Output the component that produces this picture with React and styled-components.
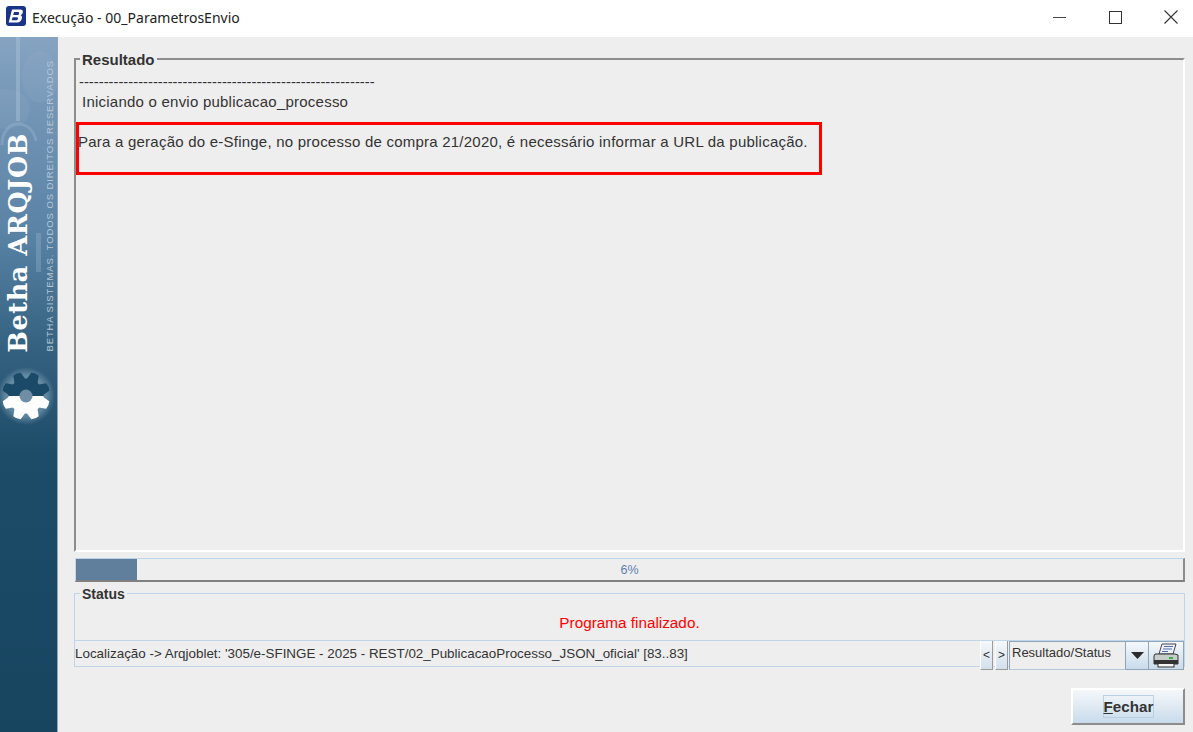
import React from 'react';
import styled, { createGlobalStyle } from 'styled-components';

const GlobalStyle = createGlobalStyle`
  html, body { margin: 0; padding: 0; background: #eeeeee; }
  body { font-family: "Liberation Sans", Arial, sans-serif; color: #333333; }
`;

const Window = styled.div`
  width: 1193px;
  height: 732px;
  display: flex;
  flex-direction: column;
  overflow: hidden;
`;

const TitleBar = styled.header`
  height: 37px;
  flex: none;
  background: #ffffff;
  display: flex;
  align-items: center;
  padding-left: 6px;
`;

const LogoSlot = styled.div`
  align-self: flex-start;
  margin-top: 6px;
  height: 20px;
`;

const TitleText = styled.span`
  margin-left: 6px;
  font-family: "Noto Sans", sans-serif;
  font-size: 14px;
  letter-spacing: 0.02px;
  color: #222222;
  flex: 1;
  position: relative;
  top: -1px;
`;

const WinButton = styled.div`
  width: 44px;
  height: 34px;
  margin-left: ${p => p.$gap || 0}px;
  align-self: flex-start;
  display: flex;
  align-items: center;
  justify-content: center;
  color: #333333;
`;

const Body = styled.div`
  flex: 1;
  display: flex;
  min-height: 0;
`;

const Sidebar = styled.aside`
  position: relative;
  width: 58px;
  flex: none;
  overflow: hidden;
  border-right: 1px solid #8fa6ba;
  box-sizing: border-box;
  background: linear-gradient(180deg, #86a4c2 0%, #7193b4 12%, #5a83a6 28%, #34617f 45%, #1d4c69 60%, #174560 100%);
`;

const SideArt = styled.svg`
  position: absolute;
  left: 0;
  top: 0;
`;

const Brand = styled.div`
  position: absolute;
  left: 2px;
  bottom: 379px;
  writing-mode: vertical-rl;
  transform: rotate(180deg);
  font-family: "DejaVu Serif", "Liberation Serif", serif;
  font-weight: 700;
  font-size: 25.5px;
  line-height: 32px;
  letter-spacing: 0.6px;
  color: #ffffff;
  white-space: nowrap;
`;

const Rights = styled.div`
  position: absolute;
  left: 44px;
  bottom: 380px;
  writing-mode: vertical-rl;
  transform: rotate(180deg);
  font-family: "Liberation Sans", sans-serif;
  font-size: 9.5px;
  line-height: 12px;
  letter-spacing: 0.9px;
  color: #b4c6d6;
  white-space: nowrap;
`;

const Main = styled.main`
  flex: 1;
  display: flex;
  flex-direction: column;
  padding: 21px 8px 0 16px;
  min-width: 0;
`;

const ResultGroup = styled.section`
  position: relative;
  height: 494px;
  box-sizing: border-box;
  border-top: 2px solid #8c8c8c;
  border-left: 2px solid #8c8c8c;
  border-right: 2px solid #ffffff;
  border-bottom: 2px solid #ffffff;
  padding-top: 15px;
  flex: none;
`;

const GroupLabel = styled.span`
  position: absolute;
  left: ${p => p.$left}px;
  top: ${p => p.$top}px;
  background: #eeeeee;
  padding: 0 2px;
  font-size: ${p => p.$size}px;
  line-height: 15px;
  font-weight: 700;
  color: #333333;
`;

const LogLine = styled.div`
  font-size: 15px;
  letter-spacing: 0.23px;
  line-height: 20px;
  height: 20px;
  margin-left: ${p => p.$indent || 0}px;
  white-space: nowrap;
  color: #333333;
`;

const Dashes = styled(LogLine)`
  font-size: 14.8px;
  letter-spacing: 0;
  line-height: 14px;
  height: 14px;
  margin-bottom: 3px;
  overflow: hidden;
`;

const Highlight = styled.div`
  width: 746px;
  height: 53px;
  box-sizing: border-box;
  border: 3px solid #ff0000;
  margin: 10px 0 0 0;
  padding: 7px 0 0 0;
`;

const ProgressTrack = styled.div`
  height: 24px;
  margin: 6px 0 0 1px;
  box-sizing: border-box;
  position: relative;
  flex: none;
  border-top: 1px solid #bcd2e8;
  border-left: 1px solid #c4d6e8;
  border-right: 2px solid #8c8c8c;
  border-bottom: 2px solid #808080;
  display: flex;
  align-items: center;
  justify-content: center;
  font-size: 12.5px;
  color: #5d7fb0;
`;

const ProgressFill = styled.div`
  position: absolute;
  left: 0;
  top: 0;
  bottom: 0;
  background: #5f7f9c;
`;

const StatusGroup = styled.section`
  position: relative;
  margin-top: 11px;
  height: 74px;
  box-sizing: border-box;
  border: 1px solid #c2d5e8;
  display: flex;
  flex-direction: column;
  flex: none;
`;

const StatusMessage = styled.div`
  height: 47px;
  flex: none;
  box-sizing: border-box;
  padding-top: 20px;
  text-align: center;
  color: #ff0000;
  font-size: 15.3px;
  line-height: 18px;
  border-bottom: 1px solid #c2d5e8;
`;

const StatusBar = styled.div`
  flex: 1;
  display: flex;
  align-items: stretch;
  font-size: 13.4px;
`;

const Location = styled.div`
  flex: 1;
  line-height: 26px;
  white-space: nowrap;
  color: #333333;
`;

const NavButton = styled.div`
  width: 13px;
  margin-right: 2px;
  background: linear-gradient(180deg, #f5f8fb 0%, #d3e0ec 100%);
  border-left: 1px solid #ffffff;
  border-right: 1px solid #9a9a9a;
  border-bottom: 1px solid #9a9a9a;
  box-sizing: border-box;
  font-size: 12px;
  line-height: 28px;
  text-align: center;
  color: #333333;
`;

const ViewSelect = styled.div`
  width: 117px;
  margin-left: -1px;
  box-sizing: border-box;
  border: 1px solid #8ea4b8;
  border-bottom-color: #b5c8da;
  background: #eeeeee;
  padding-left: 2px;
  line-height: 22px;
  font-size: 13px;
  color: #333333;
`;

const IconButton = styled.div`
  width: ${p => p.$w}px;
  box-sizing: border-box;
  border-top: 1px solid #8ea4b8;
  border-right: 1px solid #8ea4b8;
  border-bottom: 1px solid #8ea4b8;
  background: linear-gradient(180deg, #f5f8fb 0%, #c9dbea 100%);
  display: flex;
  align-items: center;
  justify-content: center;
`;

const Footer = styled.footer`
  display: flex;
  justify-content: flex-end;
  margin-top: 21px;
`;

const CloseButton = styled.button`
  width: 114px;
  height: 37px;
  box-sizing: border-box;
  padding: 0;
  border-top: 2px solid #ffffff;
  border-left: 2px solid #ffffff;
  border-right: 2px solid #8c8c8c;
  border-bottom: 2px solid #8c8c8c;
  background: linear-gradient(180deg, #f4f7fa 0%, #e6eef5 35%, #c8dbeb 100%);
  display: flex;
  align-items: center;
  justify-content: center;
  font-family: inherit;
  font-size: 15.2px;
  font-weight: 700;
  color: #333333;
`;

const CloseLabel = styled.span`
  border: 1px solid #b8cfe4;
  line-height: 21px;
  width: 51px;
  height: 23px;
  box-sizing: border-box;
  text-align: center;
`;

const Underlined = styled.span`
  text-decoration: underline;
`;

function AppLogo() {
  return (
    <svg width="20" height="20" viewBox="0 0 20 20">
      <rect x="0" y="0" width="20" height="20" rx="3" fill="#1a3488" />
      <path d="M6 3.5h8.2c2 0 3 1.2 2.6 3-.2 1.2-1 2.2-2.2 2.7 1.1.5 1.6 1.5 1.4 2.8-.4 2.4-2.2 4.5-5 4.5H2.7L6 3.5zm2 2.6-.8 3h4.2c.9 0 1.5-.5 1.7-1.5.1-.9-.3-1.5-1.2-1.5H8zm-1.4 5.2-.9 3h4.3c1 0 1.7-.6 1.9-1.6.1-.9-.3-1.4-1.3-1.4h-4z" fill="#ffffff" fillRule="evenodd" />
    </svg>
  );
}

function SidebarArt() {
  // engrenagem: metade de cima escura, metade de baixo branca
  const teeth = [];
  for (let i = 0; i < 8; i++) {
    teeth.push(<path key={i} d="M-6 -15 L-4 -23.5 Q0 -25 4 -23.5 L6 -15 Z" transform={`rotate(${i * 45 + 22.5})`} />);
  }
  const gear = (
    <g>
      <circle cx="0" cy="0" r="17.5" />
      {teeth}
    </g>
  );
  return (
    <SideArt width="58" height="695" viewBox="0 0 58 695">
      <defs>
        <radialGradient id="glow">
          <stop offset="0" stopColor="#c3d6e4" stopOpacity="0.7" />
          <stop offset="0.72" stopColor="#a9c4d8" stopOpacity="0.42" />
          <stop offset="1" stopColor="#a9c4d8" stopOpacity="0" />
        </radialGradient>
        <clipPath id="gearTop"><rect x="-40" y="-40" width="80" height="40" /></clipPath>
        <clipPath id="gearBottom"><rect x="-40" y="0" width="80" height="40" /></clipPath>
      </defs>
      <ellipse cx="6" cy="72" rx="24" ry="20" fill="#a3bbd2" opacity="0.14" />
      <ellipse cx="40" cy="40" rx="18" ry="26" fill="#a3bbd2" opacity="0.12" />
      <rect x="16" y="0" width="4" height="84" fill="#a5bfd6" opacity="0.5" />
      <path d="M2 108 C2 95 9 87 18 87 C27 87 34 93 36 104" fill="none" stroke="#a5bfd6" strokeWidth="3" opacity="0.3" />
      <rect x="36" y="196" width="5" height="39" fill="#a5bfd6" opacity="0.3" />
      <g transform="translate(26 359)">
        <circle r="29" fill="url(#glow)" />
        <g fill="#1b4a68" clipPath="url(#gearTop)">{gear}</g>
        <g fill="#ffffff" clipPath="url(#gearBottom)">{gear}</g>
        <circle r="6.5" fill="#6f8ea6" />
      </g>
    </SideArt>
  );
}

function PrinterIcon() {
  return (
    <svg width="27" height="25" viewBox="0 0 27 25">
      <path d="M9 1h14l-3 10H6z" fill="#eef2f6" stroke="#444" strokeWidth="1" />
      <path d="M11 3.5h9M10 6h9M9 8.5h6" stroke="#4a6fa8" strokeWidth="1" />
      <path d="M2 11h20l3 1v9H1v-8z" fill="#c6cdca" stroke="#333" strokeWidth="1" />
      <rect x="1" y="17" width="24" height="4" fill="#333333" />
      <rect x="16" y="14" width="4" height="2" fill="#35b04a" />
      <rect x="5" y="20.5" width="16" height="3.5" fill="#f4f4f4" stroke="#333" strokeWidth="1" />
    </svg>
  );
}

export default function App() {
  const progress = 6;

  return (
    <Window>
      <GlobalStyle />
      <TitleBar>
        <LogoSlot><AppLogo /></LogoSlot>
        <TitleText>Execução - 00_ParametrosEnvio</TitleText>
        <WinButton>
          <svg width="13" height="13" viewBox="0 0 13 13"><path d="M0 6.5h13" stroke="#444" strokeWidth="1" /></svg>
        </WinButton>
        <WinButton $gap={12}>
          <svg width="13" height="13" viewBox="0 0 13 13"><rect x="0.5" y="0.5" width="12" height="12" fill="none" stroke="#333" strokeWidth="1" /></svg>
        </WinButton>
        <WinButton $gap={12}>
          <svg width="14" height="14" viewBox="0 0 14 14"><path d="M0.5 0.5l13 13M13.5 0.5l-13 13" stroke="#333" strokeWidth="1.1" /></svg>
        </WinButton>
      </TitleBar>
      <Body>
        <Sidebar>
          <SidebarArt />
          <Brand>Betha ARQJOB</Brand>
          <Rights>BETHA SISTEMAS. TODOS OS DIREITOS RESERVADOS</Rights>
        </Sidebar>
        <Main>
          <ResultGroup>
            <GroupLabel $left={4} $top={-8} $size={15}>Resultado</GroupLabel>
            <Dashes $indent={3}>------------------------------------------------------------</Dashes>
            <LogLine $indent={6}>Iniciando o envio publicacao_processo</LogLine>
            <Highlight>
              <LogLine $indent={-1}>Para a geração do e-Sfinge, no processo de compra 21/2020, é necessário informar a URL da publicação.</LogLine>
            </Highlight>
          </ResultGroup>
          <ProgressTrack>
            <ProgressFill style={{ width: `${progress * 0.92}%` }} />
            {progress}%
          </ProgressTrack>
          <StatusGroup>
            <GroupLabel $left={5} $top={-7} $size={14}>Status</GroupLabel>
            <StatusMessage>Programa finalizado.</StatusMessage>
            <StatusBar>
              <Location>Localização -&gt; Arqjoblet: '305/e-SFINGE - 2025 - REST/02_PublicacaoProcesso_JSON_oficial' [83..83]</Location>
              <NavButton>&lt;</NavButton>
              <NavButton>&gt;</NavButton>
              <ViewSelect>Resultado/Status</ViewSelect>
              <IconButton $w={23}>
                <svg width="13" height="7" viewBox="0 0 13 7"><path d="M0 0h13L6.5 7z" fill="#2b2b2b" /></svg>
              </IconButton>
              <IconButton $w={35}>
                <PrinterIcon />
              </IconButton>
            </StatusBar>
          </StatusGroup>
          <Footer>
            <CloseButton>
              <CloseLabel><Underlined>F</Underlined>echar</CloseLabel>
            </CloseButton>
          </Footer>
        </Main>
      </Body>
    </Window>
  );
}
